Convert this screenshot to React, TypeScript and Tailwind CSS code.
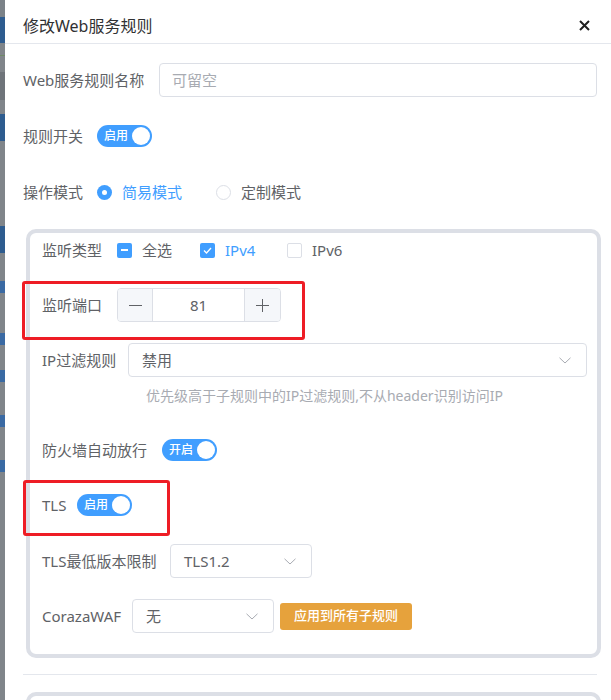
import React from "react";

function Chevron() {
  return (
    <svg width="12" height="7" viewBox="0 0 12 7" fill="none">
      <path d="M0.5 0.8 L6 6 L11.5 0.8" stroke="#a8abb2" strokeWidth="1" />
    </svg>
  );
}

function Switch({ text }: { text: string }) {
  return (
    <div className="flex h-[22px] w-[55px] items-center justify-between rounded-full bg-[#409eff] pl-[7px] pr-[2px]">
      <span className="text-[12px] font-medium leading-none text-white">{text}</span>
      <span className="h-[18px] w-[18px] rounded-full bg-white" />
    </div>
  );
}

function Select({ value, w }: { value: string; w: string }) {
  return (
    <div className={`flex h-[34px] ${w} items-center justify-between rounded-[4px] border border-[#dcdfe6] pl-[13px] pr-[15px]`}>
      <span className="text-[15px] text-[#606266]">{value}</span>
      <Chevron />
    </div>
  );
}

function Label({ children, w = "" }: { children: React.ReactNode; w?: string }) {
  return <span className={`whitespace-nowrap text-[15px] text-[#606266] ${w}`}>{children}</span>;
}

function LeftStrip() {
  const seg = (h: string, c: string, k: number) => <div key={k} className={`${h} ${c} w-full`} />;
  return (
    <div className="flex w-[5px] shrink-0 flex-col bg-[#80858a]">
      {seg("h-[17px]", "bg-[#7b8288]", 1)}
      {seg("h-[26px]", "bg-[#2e5c8f]", 2)}
      {seg("h-[12px]", "bg-[#80858a]", 3)}
      {seg("h-px", "bg-[#6f8a66]", 4)}
      {seg("h-[16px]", "bg-[#80858a]", 5)}
      {seg("h-[28px]", "bg-[#6f747a]", 6)}
      {seg("h-[14px]", "bg-[#80858a]", 7)}
      {seg("h-[27px]", "bg-[#2e5c8f]", 8)}
      {seg("h-[85px]", "bg-[#80858a]", 9)}
      {seg("h-[27px]", "bg-[#2e5c8f]", 10)}
      {seg("h-[28px]", "bg-[#80858a]", 11)}
      {seg("h-[12px]", "bg-[#3a6aa3]", 12)}
      {seg("h-[40px]", "bg-[#80858a]", 13)}
      {seg("h-[12px]", "bg-[#3a6aa3]", 14)}
      {seg("h-[25px]", "bg-[#80858a]", 15)}
      {seg("h-[12px]", "bg-[#3a6aa3]", 16)}
      {seg("h-[33px]", "bg-[#80858a]", 17)}
      {seg("h-[12px]", "bg-[#3a6aa3]", 18)}
      {seg("h-[33px]", "bg-[#80858a]", 19)}
      {seg("h-[12px]", "bg-[#3a6aa3]", 20)}
    </div>
  );
}

export default function App() {
  return (
    <div className="relative flex h-[700px] w-[611px] overflow-hidden bg-white font-['Noto_Sans','Noto_Sans_CJK_SC',sans-serif]">
      <LeftStrip />
      <div className="flex min-w-0 flex-1 flex-col bg-white">
        {/* header */}
        <div className="flex h-[44px] shrink-0 items-center justify-between border-b border-[#e4e7ed] pl-[18px] pr-[21px] pt-[8px]">
          <span className="text-[16px] text-[#303133]">修改Web服务规则</span>
          <svg width="11" height="11" viewBox="0 0 11 11">
            <path d="M1 1 L10 10 M10 1 L1 10" stroke="#1f1f1f" strokeWidth="2" />
          </svg>
        </div>

        <div className="flex flex-col pl-[18px] pr-[14px]">
          {/* name */}
          <div className="mt-[19px] flex h-[34px] items-center gap-[14px]">
            <Label w="w-[122px]">Web服务规则名称</Label>
            <div className="flex h-[34px] flex-1 items-center rounded-[4px] border border-[#dcdfe6] px-[12px] text-[15px] text-[#a8abb2]">
              可留空
            </div>
          </div>

          {/* switch */}
          <div className="mt-[22px] flex h-[34px] items-center gap-[14px]">
            <Label w="w-[60px]">规则开关</Label>
            <Switch text="启用" />
          </div>

          {/* mode */}
          <div className="mt-[22px] flex h-[34px] items-center gap-[14px]">
            <Label w="w-[60px]">操作模式</Label>
            <div className="flex items-center">
              <div className="flex w-[119px] items-center gap-[10px]">
                <span className="flex h-[15px] w-[15px] items-center justify-center rounded-full bg-[#409eff]">
                  <span className="h-[5px] w-[5px] rounded-full bg-white" />
                </span>
                <span className="text-[15px] text-[#409eff]">简易模式</span>
              </div>
              <div className="flex items-center gap-[10px]">
                <span className="h-[15px] w-[15px] rounded-full border border-[#dcdfe6] bg-white" />
                <span className="text-[15px] text-[#606266]">定制模式</span>
              </div>
            </div>
          </div>

          {/* panel */}
          <div className="ml-[3px] mr-[-4px] mt-[20px] flex flex-col rounded-[10px] border-4 border-[#dcdfe6] pb-[21px] pl-[12px] pr-[10px]">
            <div className="flex h-[34px] items-center gap-[15px]">
              <Label w="w-[60px]">监听类型</Label>
              <div className="flex items-center">
                <div className="flex w-[83px] items-center gap-[10px]">
                  <span className="flex h-[15px] w-[15px] items-center justify-center rounded-[2px] bg-[#409eff]">
                    <span className="h-[2px] w-[7px] bg-white" />
                  </span>
                  <span className="text-[15px] text-[#606266]">全选</span>
                </div>
                <div className="flex w-[87px] items-center gap-[10px]">
                  <span className="flex h-[15px] w-[15px] items-center justify-center rounded-[2px] bg-[#409eff]">
                    <svg width="9" height="7" viewBox="0 0 9 7">
                      <path d="M1 3.5 L3.5 6 L8 1" stroke="#fff" strokeWidth="1.3" fill="none" />
                    </svg>
                  </span>
                  <span className="text-[15px] text-[#409eff]">IPv4</span>
                </div>
                <div className="flex items-center gap-[10px]">
                  <span className="h-[15px] w-[15px] rounded-[2px] border border-[#dcdfe6] bg-white" />
                  <span className="text-[15px] text-[#606266]">IPv6</span>
                </div>
              </div>
            </div>

            <div className="mt-[21px] flex h-[34px] items-center gap-[15px]">
              <Label w="w-[60px]">监听端口</Label>
              <div className="flex h-[34px] w-[164px] overflow-hidden rounded-[4px] border border-[#dcdfe6]">
                <div className="flex w-[35px] items-center justify-center border-r border-[#dcdfe6] bg-[#f5f7fa]">
                  <svg width="13" height="13" viewBox="0 0 13 13">
                    <path d="M0 6.5 H13" stroke="#606266" strokeWidth="1" />
                  </svg>
                </div>
                <div className="flex flex-1 items-center justify-center text-[15px] text-[#606266]">81</div>
                <div className="flex w-[36px] items-center justify-center border-l border-[#dcdfe6] bg-[#f5f7fa]">
                  <svg width="13" height="13" viewBox="0 0 13 13">
                    <path d="M0 6.5 H13 M6.5 0 V13" stroke="#606266" strokeWidth="1" />
                  </svg>
                </div>
              </div>
            </div>

            <div className="mt-[21px] flex h-[34px] items-center gap-[14px]">
              <Label w="w-[72px]">IP过滤规则</Label>
              <Select value="禁用" w="flex-1" />
            </div>
            <div className="ml-[104px] mt-[11px] h-[16px] whitespace-nowrap text-[14px] leading-[16px] text-[#a8abb2]">
              优先级高于子规则中的IP过滤规则,不从header识别访问IP
            </div>

            <div className="mt-[29px] flex h-[34px] items-center gap-[14px]">
              <Label w="w-[106px]">防火墙自动放行</Label>
              <Switch text="开启" />
            </div>

            <div className="mt-[21px] flex h-[34px] items-center gap-[14px]">
              <Label w="w-[21px]">TLS</Label>
              <Switch text="启用" />
            </div>

            <div className="mt-[22px] flex h-[34px] items-center gap-[14px]">
              <Label w="w-[114px]">TLS最低版本限制</Label>
              <Select value="TLS1.2" w="w-[142px]" />
            </div>

            <div className="mt-[21px] flex h-[34px] items-center gap-[14px]">
              <Label w="w-[76px]">CorazaWAF</Label>
              <Select value="无" w="w-[142px]" />
              <div className="ml-[-8px] flex h-[27px] w-[132px] items-center justify-center rounded-[3px] bg-[#e6a23c] text-[13px] font-medium text-white">
                应用到所有子规则
              </div>
            </div>
          </div>

          <div className="mt-[16px] h-px bg-[#e4e7ed]" />

          <div className="ml-[3px] mr-[-4px] mt-[17px] h-[40px] rounded-[10px] border-4 border-[#dcdfe6]" />
        </div>
      </div>

      {/* annotation rectangles */}
      <div className="pointer-events-none absolute left-[22px] top-[281px] h-[59px] w-[283px] rounded-[3px] border-[3px] border-[#ee1d25]" />
      <div className="pointer-events-none absolute left-[23px] top-[480px] h-[56px] w-[147px] rounded-[3px] border-[3px] border-[#ee1d25]" />
    </div>
  );
}
